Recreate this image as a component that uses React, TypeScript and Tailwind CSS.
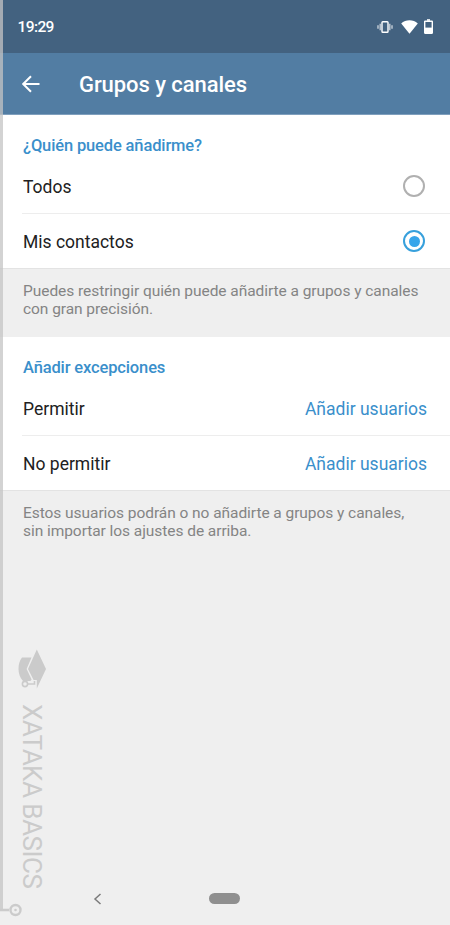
import type { ReactNode } from 'react'
import clsx from 'clsx'

function StatusBar() {
  return (
    <div className="flex h-[53px] items-center justify-between bg-[#436280] pl-[17.5px] pr-[17px] text-white">
      <span className="pt-px text-[15.5px] font-medium leading-5 tracking-[-0.6px]">19:29</span>
      <div className="flex items-center">
        {/* Vibrate */}
        <svg width="16" height="14" viewBox="0 0 16 14" fill="none" stroke="currentColor">
          <rect x="5" y="1.8" width="6" height="10.4" rx="0.8" strokeWidth="1.4" />
          <path d="M3.2 3.8v6.4M12.8 3.8v6.4" strokeWidth="1.3" opacity="0.75" />
          <path d="M1 5.2v3.6M15 5.2v3.6" strokeWidth="1.3" opacity="0.75" />
        </svg>
        {/* Wifi */}
        <svg className="ml-2" width="17" height="14" viewBox="0 0 17 14" fill="currentColor">
          <path d="M8.5 13.8 0.2 3.4C2.5 1.3 5.4 0.2 8.5 0.2s6 1.1 8.3 3.2z" />
        </svg>
        {/* Battery */}
        <svg className="ml-1.5" width="9" height="15" viewBox="0 0 9 15" fill="none">
          <path d="M3 0.2h3v1.6H3z" fill="currentColor" />
          <rect x="0.7" y="2.2" width="7.6" height="12" rx="0.4" stroke="currentColor" strokeWidth="1.4" />
          <path d="M0.7 8.6h7.6v5.8H0.7z" fill="currentColor" />
        </svg>
      </div>
    </div>
  )
}

function AppBar() {
  return (
    <header className="flex h-[62px] items-center border-b border-[#7f9fbd] bg-[#527da3] pl-[22px] text-white">
      <svg width="18" height="18" viewBox="0 0 18 18" fill="none" stroke="currentColor" strokeWidth="2">
        <path d="M17.5 9H1.6M9 1.2 1.2 9 9 16.8" />
      </svg>
      <h1 className="ml-[39px] pt-[2px] text-[22px] font-medium leading-7 tracking-[-0.07px]">Grupos y canales</h1>
    </header>
  )
}

function Section({ title, children }: { title: string; children: ReactNode }) {
  return (
    <section className="border-b border-[#e3e3e3] bg-white">
      <h2 className="pl-[23px] pt-5 text-[16.5px] font-medium leading-[22px] tracking-[-0.14px] text-[#3a8fcb]">
        {title}
      </h2>
      {children}
    </section>
  )
}

function Row({ label, first, children }: { label: string; first?: boolean; children: ReactNode }) {
  return (
    <div
      className={clsx(
        'ml-[22px] flex items-center justify-between pl-px pr-[23px] text-[17.5px] leading-6 text-[#212121]',
        first ? 'h-[57px] border-b border-[#ededed] pt-[2px]' : 'h-[54px]',
      )}
    >
      <span className="pt-[2px]">{label}</span>
      {children}
    </div>
  )
}

function Radio({ checked }: { checked?: boolean }) {
  return (
    <span
      className={clsx(
        'mr-[2px] flex size-[22px] items-center justify-center rounded-full border-2',
        checked ? 'border-[#37a0dc]' : 'border-[#b0b0b0]',
      )}
    >
      {checked && <span className="size-[11px] rounded-full bg-[#37a5ea]" />}
    </span>
  )
}

function AddUsers() {
  return <button className="pt-[2px] text-[#3a8fcb]">Añadir usuarios</button>
}

function Note({ children }: { children: ReactNode }) {
  return (
    <p className="h-[68px] pl-[23px] pt-[13px] text-[15.5px] leading-[18px] tracking-[-0.055px] text-[#848484]">
      {children}
    </p>
  )
}

function NavBar() {
  return (
    <nav className="mt-auto flex h-[53px] items-center pl-[93px]">
      <svg width="9" height="12" viewBox="0 0 9 12" fill="none" stroke="#7b7b7b" strokeWidth="1.5">
        <path d="M7.5 1 2 6l5.5 5" />
      </svg>
      <span className="ml-[107px] h-[11px] w-[31px] rounded-full bg-[#8f8f8f]" />
    </nav>
  )
}

// Brand strip laid over the left edge of the screen
function Watermark() {
  return (
    <div className="pointer-events-none absolute inset-0">
      <div className="absolute left-0 top-0 h-[911px] w-[3px] bg-[#c4c4c4]/75" />
      <svg className="absolute bottom-2 left-0" width="24" height="14" viewBox="0 0 24 14" fill="none" stroke="#cbcbcb">
        <path d="M0 7h9" strokeWidth="2.6" />
        <circle cx="15.5" cy="7" r="5" strokeWidth="2.4" />
        <circle cx="15.5" cy="7" r="1.3" fill="#cbcbcb" stroke="none" />
      </svg>
      <svg className="absolute left-[18px] top-[649px]" width="29" height="41" viewBox="0 0 29 41" fill="#cbcbcb">
        <path d="M4 8.5h9.5L8.6 20l5 10.500-1.200 1.500H5C2 29 0.500 24.500 0.500 20S1.500 11.500 4 8.500z" />
        <path d="M18.800 0.500 28 20 18.800 39.500V31h-3.200L10 20z" />
        <path d="M9.500 35H16.500V32" fill="none" stroke="#cbcbcb" strokeWidth="1.600" />
        <circle cx="7" cy="35" r="2.600" fill="#efefef" stroke="#cbcbcb" strokeWidth="1.600" />
      </svg>
      <span className="absolute left-[17px] top-[704px] text-[26px] leading-[30px] tracking-[-0.5px] text-[#cbcbcb] [writing-mode:vertical-rl]">
        XATAKA BASICS
      </span>
    </div>
  )
}

export default function App() {
  return (
    <div className="relative flex h-[925px] w-[450px] flex-col overflow-hidden bg-[#efefef] font-[Roboto,sans-serif]">
      <StatusBar />
      <AppBar />
      <Section title="¿Quién puede añadirme?">
        <Row label="Todos" first>
          <Radio />
        </Row>
        <Row label="Mis contactos">
          <Radio checked />
        </Row>
      </Section>
      <Note>
        Puedes restringir quién puede añadirte a grupos y canales
        <br />
        con gran precisión.
      </Note>
      <Section title="Añadir excepciones">
        <Row label="Permitir" first>
          <AddUsers />
        </Row>
        <Row label="No permitir">
          <AddUsers />
        </Row>
      </Section>
      <Note>
        Estos usuarios podrán o no añadirte a grupos y canales,
        <br />
        sin importar los ajustes de arriba.
      </Note>
      <NavBar />
      <Watermark />
    </div>
  )
}
